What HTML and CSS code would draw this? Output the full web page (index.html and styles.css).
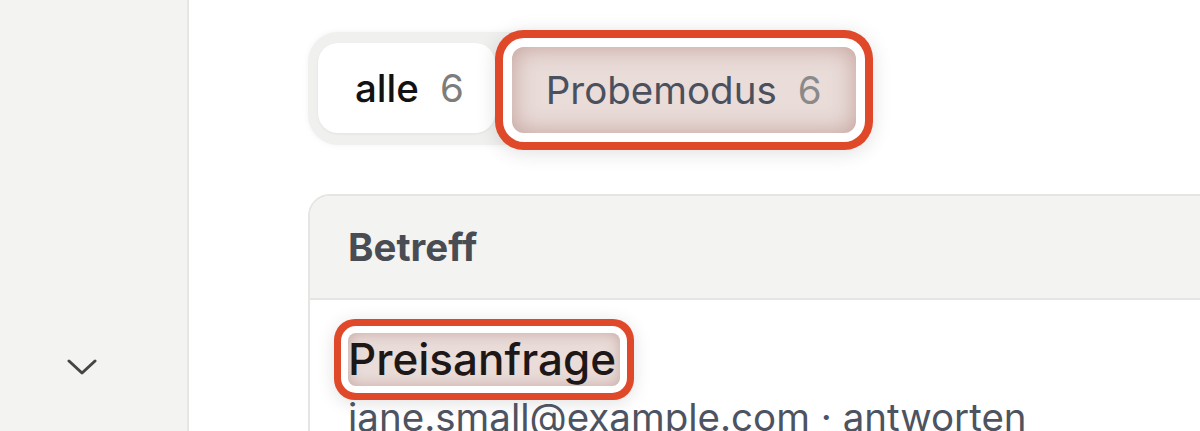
FILE: index.html
```html
<!DOCTYPE html>
<html lang="de">
<head>
<meta charset="utf-8">
<title>Nachrichten</title>
<link rel="stylesheet" href="styles.css">
</head>
<body>
<div class="app">
  <aside class="sidebar">
    <div class="sidebar-foot">
      <svg class="chevron" width="30" height="16" viewBox="0 0 30 16" aria-hidden="true">
        <path d="M2 2 L15 14 L28 2" fill="none" stroke="#454545" stroke-width="3" stroke-linecap="round" stroke-linejoin="round"/>
      </svg>
    </div>
  </aside>
  <main class="main">
    <div class="tabs">
      <div class="tab tab-active"><span class="tab-label">alle</span><span class="tab-count">6</span></div>
      <div class="tab tab-marked hl hl-tab"><span class="tab-label">Probemodus</span><span class="tab-count">6</span></div>
    </div>
    <div class="card">
      <div class="card-head">Betreff</div>
      <div class="card-row">
        <span class="subject hl hl-subject">Preisanfrage</span>
        <div class="meta">jane.small@example.com · antworten</div>
      </div>
    </div>
  </main>
</div>
</body>
</html>
```
FILE: styles.css
```css
* { box-sizing: border-box; }
html, body { margin: 0; padding: 0; }
body {
  background: #ffffff;
  font-family: Inter, "Noto Sans", "Liberation Sans", sans-serif;
  color: #1a1a1a;
  overflow: hidden;
}
.app {
  display: flex;
  height: 431px;
  overflow: hidden;
}
.sidebar {
  width: 189px;
  flex: 0 0 189px;
  background: #f3f3f1;
  border-right: 2px solid #e6e6e4;
  display: flex;
  flex-direction: column;
  justify-content: flex-end;
}
.sidebar-foot {
  padding: 0 0 55px 67px;
  height: 72px;
}
.chevron { display: block; }
.main {
  flex: 1;
  padding: 32px 0 0 119px;
  min-width: 0;
}
.tabs {
  display: inline-flex;
  align-items: flex-end;
  gap: 17px;
  padding: 11px 11px 12px 10px;
  background: #f0f0ee;
  border-radius: 30px;
  box-shadow: 0 0 6px rgba(0, 0, 0, 0.05);
}
.tab {
  display: flex;
  align-items: center;
  gap: 21px;
  padding: 0 31px 0 37px;
  font-size: 38.5px;
  line-height: 1;
  white-space: nowrap;
}
.tab-active {
  height: 90px;
  background: #ffffff;
  border-radius: 20px;
  box-shadow: 0 1px 3px rgba(0, 0, 0, 0.06);
  color: #121212;
  font-weight: 500;
}
.tab-active .tab-count { font-weight: 400; }
.tab-marked {
  height: 86px;
  padding: 0 34px 0 34px;
  border-radius: 12px;
  color: #4a505e;
}
.tab-count { color: #7d7d7d; }
.tab-marked .tab-count { color: #8a8a8a; }

/* annotation highlight (overlay ring) */
.hl {
  background: #e9dcd9;
}
.hl-tab {
  box-shadow:
    0 0 0 9px #ffffff,
    0 0 0 17px #e0482a,
    0 3px 20px 17px rgba(0, 0, 0, 0.12),
    inset 0 0 24px rgba(170, 118, 110, 0.6);
}
.hl-subject {
  box-shadow:
    0 0 0 7px #ffffff,
    0 0 0 14px #e0482a,
    0 3px 18px 14px rgba(0, 0, 0, 0.12),
    inset 0 0 14px rgba(170, 118, 110, 0.5);
}

.card {
  margin-top: 49px;
  width: calc(100% + 60px);
  border: 2px solid #e5e5e3;
  border-radius: 22px 0 0 0;
  background: #ffffff;
}
.card-head {
  height: 104px;
  display: flex;
  align-items: center;
  padding: 0 38px;
  background: #f3f3f1;
  border-bottom: 2px solid #e5e5e3;
  border-radius: 20px 0 0 0;
  font-size: 38.5px;
  font-weight: 700;
  color: #4a4c53;
}
.card-row {
  padding: 33px 38px 0;
}
.subject {
  display: inline-block;
  font-size: 44px;
  line-height: 53px;
  font-weight: 500;
  color: #1e1717;
  padding: 0 4px 0 0;
  border-radius: 8px;
}
.meta {
  margin-top: 8px;
  font-size: 38.5px;
  line-height: 46px;
  color: #4d5361;
  white-space: nowrap;
}
```
